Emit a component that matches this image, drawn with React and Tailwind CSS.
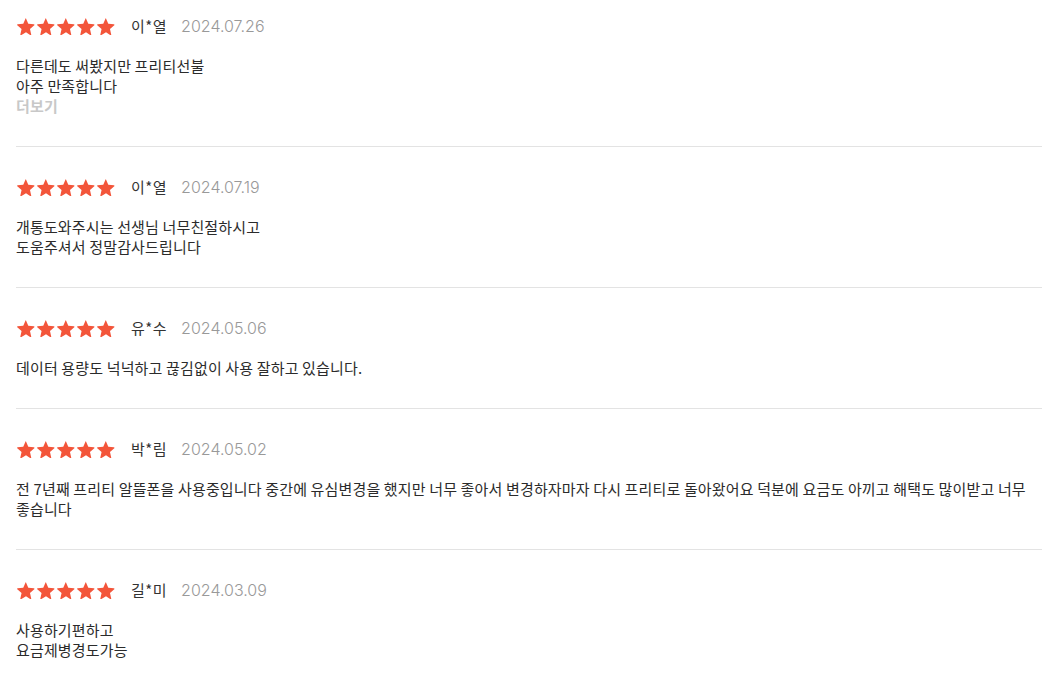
import React from "react";

const reviews = [
  { name: "이*열", date: "2024.07.26", lines: ["다른데도 써봤지만 프리티선불", "아주 만족합니다"], more: true },
  { name: "이*열", date: "2024.07.19", lines: ["개통도와주시는 선생님 너무친절하시고", "도움주셔서 정말감사드립니다"] },
  { name: "유*수", date: "2024.05.06", lines: ["데이터 용량도 넉넉하고 끊김없이 사용 잘하고 있습니다."] },
  { name: "박*림", date: "2024.05.02", lines: ["전 7년째 프리티 알뜰폰을 사용중입니다 중간에 유심변경을 했지만 너무 좋아서 변경하자마자 다시 프리티로 돌아왔어요 덕분에 요금도 아끼고 해택도 많이받고 너무 좋습니다"] },
  { name: "길*미", date: "2024.03.09", lines: ["사용하기편하고", "요금제병경도가능"] },
];

function Star() {
  return (
    <svg width="18" height="17" viewBox="0 0 24 23" className="shrink-0">
      <path
        d="M12 0.8l3.1 7.1 7.7.7c.6.1.9.8.4 1.2l-5.8 5.1 1.7 7.6c.1.6-.5 1.1-1.1.8L12 19.3l-6.6 4c-.6.3-1.2-.2-1.1-.8l1.7-7.6L.2 9.8c-.5-.4-.2-1.1.4-1.2l7.7-.7L11.4.8c.2-.5.9-.5.6 0z"
        fill="#F3553A"
      />
    </svg>
  );
}

export default function App() {
  return (
    <div
      className="w-[1056px] bg-white"
      style={{ fontFamily: '"Noto Sans CJK KR", "Noto Sans", sans-serif' }}
    >
      <ul className="ml-4 w-[1026px]">
        {reviews.map((r, i) => (
          <li
            key={i}
            className={`${i === 0 ? "pt-[16px]" : "pt-[30px]"} ${i < reviews.length - 1 ? "pb-[30px] border-b border-[#e3e3e3]" : "pb-[30px]"}`}
          >
            <div className="flex h-5 items-center">
              <div className="flex items-center gap-[2px] pl-px">
                <Star />
                <Star />
                <Star />
                <Star />
                <Star />
              </div>
              <span className="ml-[16px] text-[15px] leading-5 text-[#333] tracking-[0.5px]">{r.name}</span>
              <span
                className="ml-[14px] text-[16px] leading-5 text-[#999]"
                style={{ fontFamily: 'Inter, "Noto Sans", sans-serif', fontWeight: 300 }}
              >
                {r.date}
              </span>
            </div>
            <div className="mt-5 break-keep text-[15px] leading-5 tracking-[0.15px] text-[#2b2b2b]">
              {r.lines.map((l, j) => (
                <p key={j}>{l}</p>
              ))}
              {r.more && <p className="font-bold text-[#c8c8c8]">더보기</p>}
            </div>
          </li>
        ))}
      </ul>
    </div>
  );
}
